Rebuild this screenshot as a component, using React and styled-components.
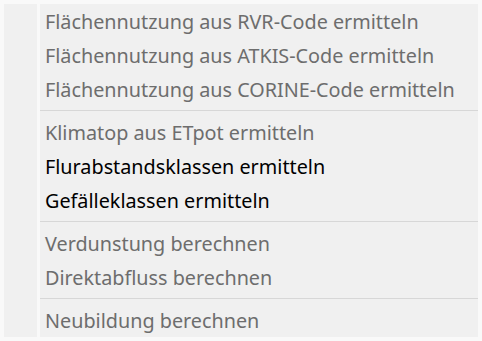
import React from "react";
import styled, { createGlobalStyle } from "styled-components";

const Global = createGlobalStyle`
  html, body {
    margin: 0;
    padding: 0;
    background: #f9f9f9;
  }
`;

const sections = [
  [
    { label: "Flächennutzung aus RVR-Code ermitteln", disabled: true },
    { label: "Flächennutzung aus ATKIS-Code ermitteln", disabled: true },
    { label: "Flächennutzung aus CORINE-Code ermitteln", disabled: true },
  ],
  [
    { label: "Klimatop aus ETpot ermitteln", disabled: true },
    { label: "Flurabstandsklassen ermitteln" },
    { label: "Gefälleklassen ermitteln" },
  ],
  [
    { label: "Verdunstung berechnen", disabled: true },
    { label: "Direktabfluss berechnen", disabled: true },
  ],
  [{ label: "Neubildung berechnen", disabled: true }],
];

const App = () => {
  return (
    <>
      <Global />
      <Menu>
        <Gutter />
        <Items>
          {sections.map((sec, i) => (
            <React.Fragment key={i}>
              {i > 0 && <Separator />}
              {sec.map((item) => (
                <Item key={item.label} $disabled={item.disabled}>
                  {item.label}
                </Item>
              ))}
            </React.Fragment>
          ))}
        </Items>
      </Menu>
    </>
  );
};

export default App;

const Menu = styled.div`
  margin: 4px 0 0 4px;
  width: 474px;
  height: 333px;
  display: flex;
  gap: 3px;
  font-family: "Noto Sans", "Open Sans", sans-serif;
`;

const Gutter = styled.div`
  width: 33px;
  background: #f0f0f0;
`;

const Items = styled.div`
  flex: 1;
  background: #f0f0f0;
  display: flex;
  flex-direction: column;
`;

const Item = styled.div`
  height: 34px;
  display: flex;
  align-items: center;
  padding-left: 5px;
  font-size: 19.8px;
  color: ${(p) => (p.$disabled ? "#6d6d6d" : "#000")};
  white-space: nowrap;
`;

const Separator = styled.div`
  height: 1px;
  margin: 4px 0 4px;
  background: #d7d7d7;
`;
